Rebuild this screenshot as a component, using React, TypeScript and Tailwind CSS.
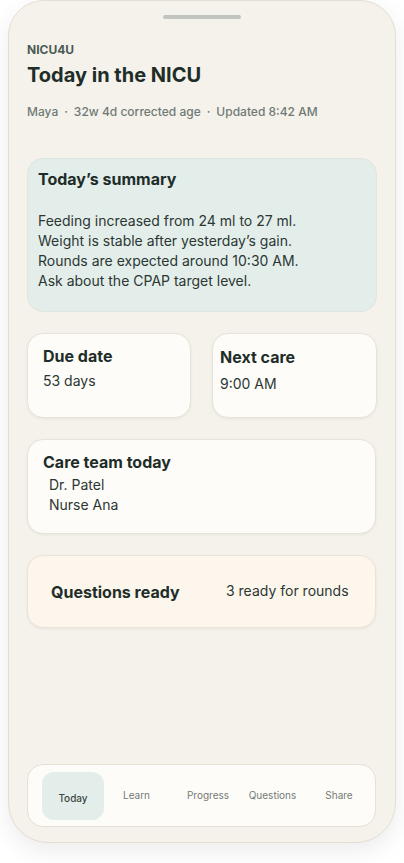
import React from 'react';

const tabs = [
  { name: 'Today', width: 'w-[62px]', active: true },
  { name: 'Learn', width: 'w-[65px]' },
  { name: 'Progress', width: 'w-[78px]' },
  { name: 'Questions', width: 'w-[51px]' },
  { name: 'Share', width: 'w-[82px]' },
];

export default function App() {
  return (
    <div className="min-h-[863px] bg-white font-['Inter',sans-serif] text-[#1f2d29]">
      <div className="mx-[8px] flex h-[843px] flex-col rounded-b-[40px] rounded-t-[36px] border border-[#e3ded4] bg-[#f5f2eb] px-[18px] shadow-[0_8px_24px_rgba(0,0,0,0.08)]">
        <div className="mx-auto mt-[14px] h-[4px] w-[78px] rounded-full bg-[#c1c5c0]" />

        <header className="mt-[23px]">
          <div className="text-[12px] font-bold leading-4 text-[#4c5b56]">NICU4U</div>
          <h1 className="mt-[3px] text-[20px] font-bold leading-7 text-[#1f2d29]">Today in the NICU</h1>
          <p className="mt-[15px] flex gap-[6px] text-[12px] font-medium leading-4 text-[#707a75]">
            <span>Maya</span>
            <span>·</span>
            <span>32w 4d corrected age</span>
            <span>·</span>
            <span>Updated 8:42 AM</span>
          </p>
        </header>

        <section className="mt-[38px] w-[350px] rounded-[16px] border border-[#dfe6df] bg-[#e3eeeb] pb-[20px] pl-[10px] pr-4 pt-[8px]">
          <h2 className="text-[16px] font-bold leading-6">Today’s summary</h2>
          <div className="mt-[20px] text-[14px] leading-5 text-[#2c3633]">
            <p>Feeding increased from 24 ml to 27 ml.</p>
            <p>Weight is stable after yesterday’s gain.</p>
            <p>Rounds are expected around 10:30 AM.</p>
            <p>Ask about the CPAP target level.</p>
          </div>
        </section>

        <div className="mt-[21px] flex gap-[21px]">
          <div className="h-[85px] w-[165px] rounded-[16px] border border-[#e8e3d9] bg-[#fefcf8] pl-[15px] pt-[10px] shadow-[0_1px_3px_rgba(0,0,0,0.06)]">
            <h3 className="text-[16px] font-bold leading-6">Due date</h3>
            <p className="mt-[3px] text-[14px] leading-5 text-[#2c3633]">53 days</p>
          </div>
          <div className="h-[85px] w-[166px] rounded-[16px] border border-[#e8e3d9] bg-[#fefcf8] pl-[7px] pt-[11px] shadow-[0_1px_3px_rgba(0,0,0,0.06)]">
            <h3 className="text-[16px] font-bold leading-6">Next care</h3>
            <p className="mt-[5px] text-[14px] leading-5 text-[#2c3633]">9:00 AM</p>
          </div>
        </div>

        <section className="mt-[21px] h-[95px] w-[349px] rounded-[16px] border border-[#e8e3d9] bg-[#fefcf8] pl-[15px] pt-[10px] shadow-[0_1px_3px_rgba(0,0,0,0.06)]">
          <h3 className="text-[16px] font-bold leading-6">Care team today</h3>
          <div className="mt-[1px] pl-[6px] text-[14px] leading-5 text-[#2c3633]">
            <p>Dr. Patel</p>
            <p>Nurse Ana</p>
          </div>
        </section>

        <section className="mt-[21px] flex h-[73px] w-[349px] items-center rounded-[16px] border border-[#ebe3d6] bg-[#fdf6ec] pl-[23px] shadow-[0_1px_3px_rgba(0,0,0,0.06)]">
          <h3 className="w-[175px] text-[16px] font-bold leading-6">Questions ready</h3>
          <p className="-mt-[2px] text-[14px] leading-5 text-[#2c3633]">3 ready for rounds</p>
        </section>

        <nav className="mb-[15px] mt-auto flex h-[63px] w-[349px] items-center rounded-[16px] border border-[#e5dfd4] bg-[#fefcf8] pl-[14px]">
          {tabs.map((tab) => (
            <div
              key={tab.name}
              className={
                tab.active
                  ? `${tab.width} flex h-[48px] shrink-0 items-center justify-center rounded-[12px] bg-[#e3eeeb] pt-[5px] text-[10px] font-medium text-[#3b4844]`
                  : `${tab.width} flex h-[48px] shrink-0 items-center justify-center text-[10px] text-[#727b76]`
              }
            >
              {tab.name}
            </div>
          ))}
        </nav>
      </div>
    </div>
  );
}
